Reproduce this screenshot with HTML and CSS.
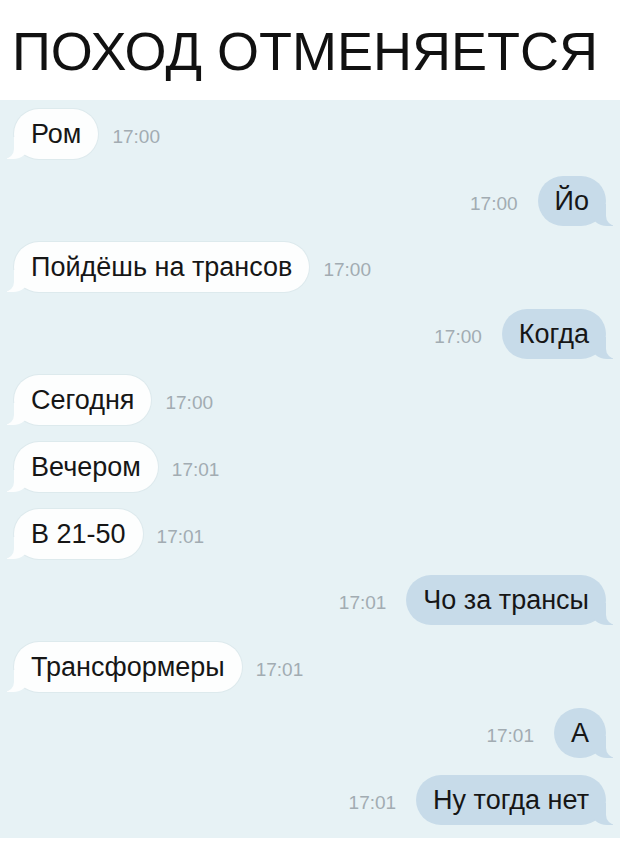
FILE: index.html
```html
<!DOCTYPE html>
<html lang="ru">
<head>
  <meta charset="UTF-8" />
  <meta name="viewport" content="width=device-width, initial-scale=1.0" />
  <title>Поход отменяется</title>
  <link rel="stylesheet" href="styles.css">
</head>
<body>
  <h1 class="title">ПОХОД ОТМЕНЯЕТСЯ</h1>

  <div class="chat">
    <div class="msg in"><div class="bubble">Ром</div><span class="time">17:00</span></div>
    <div class="msg out"><span class="time">17:00</span><div class="bubble">Йо</div></div>
    <div class="msg in"><div class="bubble">Пойдёшь на трансов</div><span class="time">17:00</span></div>
    <div class="msg out"><span class="time">17:00</span><div class="bubble">Когда</div></div>
    <div class="msg in"><div class="bubble">Сегодня</div><span class="time">17:00</span></div>
    <div class="msg in"><div class="bubble">Вечером</div><span class="time">17:01</span></div>
    <div class="msg in"><div class="bubble">В 21-50</div><span class="time">17:01</span></div>
    <div class="msg out"><span class="time">17:01</span><div class="bubble">Чо за трансы</div></div>
    <div class="msg in"><div class="bubble">Трансформеры</div><span class="time">17:01</span></div>
    <div class="msg out"><span class="time">17:01</span><div class="bubble">А</div></div>
    <div class="msg out"><span class="time">17:01</span><div class="bubble">Ну тогда нет</div></div>
  </div>
</body>
</html>
```

FILE: styles.css
```css
body {
  margin: 0;
  background-color: #ffffff;
  font-family: "Liberation Sans", Arial, sans-serif;
  color: #161616;
}
.title {
  margin: 0;
  height: 100px;
  padding: 3px 0 0 12px;
  box-sizing: border-box;
  font-size: 54px;
  font-weight: normal;
  line-height: 97px;
  color: #111111;
}
.chat {
  background-color: #e7f2f5;
  height: 738px;
  box-sizing: border-box;
  padding: 9px 14px 0 14px;
  display: flex;
  flex-direction: column;
  gap: 16.6px;
}
.msg {
  display: flex;
  align-items: baseline;
}
.msg.in {
  gap: 14px;
}
.msg.out {
  justify-content: flex-end;
  gap: 20px;
}
.bubble {
  position: relative;
  height: 50px;
  line-height: 50px;
  padding: 0 17px;
  border-radius: 25px;
  font-size: 27px;
  white-space: nowrap;
}
.in .bubble {
  background-color: #fdfefe;
  box-shadow: 0 0 0 1px rgba(120, 140, 150, 0.08);
}
.out .bubble {
  background-color: #c7dbe9;
}
.bubble::before,
.bubble::after {
  content: "";
  position: absolute;
  bottom: 0;
  height: 22px;
}
.in .bubble::before {
  left: -7px;
  width: 22px;
  background-color: #fdfefe;
  border-bottom-right-radius: 16px 14px;
}
.in .bubble::after {
  left: -12px;
  width: 12px;
  background-color: #e7f2f5;
  border-bottom-right-radius: 10px;
}
.out .bubble::before {
  right: -7px;
  width: 22px;
  background-color: #c7dbe9;
  border-bottom-left-radius: 16px 14px;
}
.out .bubble::after {
  right: -12px;
  width: 12px;
  background-color: #e7f2f5;
  border-bottom-left-radius: 10px;
}
.time {
  font-size: 19px;
  color: #a2acb2;
}
```
